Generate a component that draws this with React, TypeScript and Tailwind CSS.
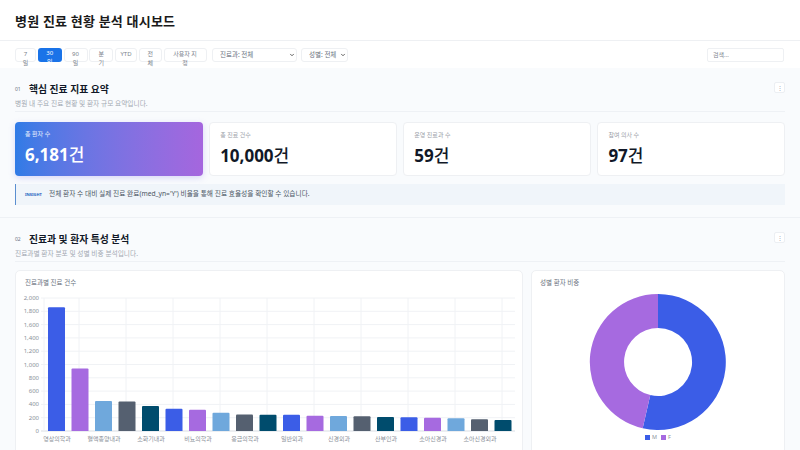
import { ChevronDown } from "lucide-react";

const font = "[font-family:'Noto_Sans','Noto_Sans_CJK_KR',sans-serif]";

const ranges = [
  { label: "7일", size: "w-[21px] px-[6px]" },
  { label: "30일", size: "w-6 px-[6px]", active: true },
  { label: "90일", size: "w-6 px-[6px]" },
  { label: "분기", size: "w-6 px-[7px]" },
  { label: "YTD", size: "w-[22px] px-[2px]" },
  { label: "전체", size: "w-[23px] px-[6px]" },
  { label: "사용자 지정", size: "w-[43px] px-[7px]" },
];

const kpis = [
  { label: "총 환자 수", value: "6,181", highlight: true },
  { label: "총 진료 건수", value: "10,000" },
  { label: "운영 진료과 수", value: "59" },
  { label: "참여 의사 수", value: "97" },
];

const palette = ["#3b5de7", "#a66ae0", "#6fa8dc", "#556070", "#004c6d"];
const visits = [1860, 940, 450, 445, 375, 335, 320, 275, 250, 245, 245, 230, 225, 220, 210, 205, 200, 190, 175, 165];
const depts = ["영상의학과", "혈액종양내과", "소화기내과", "비뇨의학과", "응급의학과", "일반외과", "신경외과", "산부인과", "소아신경과", "소아신경외과"];

function SectionHead({ num, title, desc }: { num: string; title: string; desc: string }) {
  return (
    <div className="flex items-start justify-between border-b border-[#eef1f5] h-[30px]">
      <div>
        <div className="flex items-center h-[15px]">
          <span className="w-[14px] text-[5px] text-[#6b7280]">{num}</span>
          <h2 className="text-[9.8px] leading-none font-bold text-[#111827]">{title}</h2>
        </div>
        <p className="mt-[3px] text-[6.7px] leading-[8px] text-[#a3a9b2]">{desc}</p>
      </div>
      <button className="w-[11px] h-[11px] bg-white border border-[#eceff3] rounded-[2px] text-[6px] leading-none text-[#9ca3af] flex items-center justify-center">
        ⋮
      </button>
    </div>
  );
}

function BarChart() {
  const yBase = 150;
  const scale = 133 / 2000;
  return (
    <svg width="506" height="170" className="block">
      {Array.from({ length: 11 }, (_, i) => {
        const y = yBase - i * 13.3;
        return (
          <g key={i}>
            <line x1="25" x2="499" y1={y} y2={y} stroke={i === 0 ? "#d9dde3" : "#f0f2f5"} />
            <text x="23" y={y + 2} textAnchor="end" fontSize="6" fill="#8a9099">
              {(i * 200).toLocaleString("en-US")}
            </text>
          </g>
        );
      })}
      {[28, 63, 110, 157, 204, 251, 298, 345, 392, 439, 486].map((x) => (
        <line key={x} x1={x} x2={x} y1={yBase - 133} y2={yBase} stroke="#f0f2f5" />
      ))}
      {visits.map((v, i) => {
        const left = 32 + i * 23.5;
        const top = yBase - v * scale;
        return (
          <path
            key={i}
            d={`M${left} ${yBase}V${top + 1}q0 -1 1 -1H${left + 16}q1 0 1 1V${yBase}Z`}
            fill={palette[i % 5]}
          />
        );
      })}
      {depts.map((d, i) => (
        <text key={d} x={41 + i * 47} y={160} textAnchor="middle" fontSize="6" fill="#8a9099">
          {d}
        </text>
      ))}
    </svg>
  );
}

function Donut() {
  return (
    <svg width="140" height="140" viewBox="-70 -70 140 140" className="block">
      <path d="M0 -68A68 68 0 1 1 -15.3 66.3L-7.7 33.1A34 34 0 1 0 0 -34Z" fill="#3b5de7" />
      <path d="M-15.3 66.3A68 68 0 0 1 0 -68L0 -34A34 34 0 0 0 -7.7 33.1Z" fill="#a66ae0" />
    </svg>
  );
}

function Select({ label, className }: { label: string; className: string }) {
  return (
    <div className={`relative h-[14px] ${className}`}>
      <select className="block w-full h-full appearance-none bg-white border border-[#eef0f3] rounded-[3px] text-[6.5px] text-[#6b7280] pl-[7px]">
        <option>{label}</option>
      </select>
      <ChevronDown size={6} strokeWidth={3} className="absolute right-[2px] top-1 text-[#333] pointer-events-none" />
    </div>
  );
}

export default function App() {
  return (
    <div className={`w-[800px] h-[450px] overflow-hidden bg-[#f9fbfd] ${font}`}>
      {/* Title */}
      <header className="h-[41px] bg-white border-b border-[#eef0f3] flex items-center px-[15px] pt-[4px]">
        <h1 className="text-[13px] font-semibold tracking-[0.2px] text-[#1a1a1a]">병원 진료 현황 분석 대시보드</h1>
      </header>

      {/* Filters */}
      <div className="h-[27px] bg-white flex items-start pt-[7px] pl-[15px] pr-[16px]">
        <div className="flex gap-[1.75px]">
          {ranges.map((r) => (
            <button
              key={r.label}
              className={`${r.size} h-[14px] rounded-[3px] text-[6px] leading-[9px] pt-[1px] flex flex-col justify-start ${
                r.active ? "bg-[#1a73e8] text-white" : "bg-white border border-[#eef0f3] text-[#7b828c]"
              }`}
            >
              <span className="block w-full text-center break-all">{r.label}</span>
            </button>
          ))}
        </div>
        <Select label="진료과: 전체" className="ml-[5.5px] w-[85px]" />
        <Select label="성별: 전체" className="ml-[4px] w-[47px]" />
        <input
          placeholder="검색..."
          className="ml-auto w-[77px] h-[14px] bg-white border border-[#eef0f3] rounded-[2px] text-[6px] px-[5px] placeholder:text-[#7b828c]"
        />
      </div>

      {/* Section 1 */}
      <section className="h-[150px] px-[15px] pt-[14px] border-b border-[#eef1f5]">
        <SectionHead num="01" title="핵심 진료 지표 요약" desc="병원 내 주요 진료 현황 및 환자 규모 요약입니다." />
        <div className="mt-[10px] grid grid-cols-4 gap-[6.5px]">
          {kpis.map((k) => (
            <div
              key={k.label}
              className={`h-[54px] rounded-[4px] px-[10px] ${
                k.highlight
                  ? "bg-gradient-to-r from-[#2f7be6] to-[#a566de] text-white shadow-[0_2px_6px_rgba(120,110,230,0.25)]"
                  : "bg-white border border-[#eef0f3] text-[#111827]"
              }`}
            >
              <div className={`mt-[8px] text-[6px] leading-[8px] ${k.highlight ? "text-white/90" : "text-[#9aa0a8]"}`}>{k.label}</div>
              <div className="mt-[4px] text-[17px] leading-[26px] font-bold">
                {k.value}
                <span className="font-medium">건</span>
              </div>
            </div>
          ))}
        </div>
        <div className="mt-[8px] h-[21px] bg-[#f0f5fa] border-l border-[#5b8fd0] flex items-center pl-[9px] gap-[5px]">
          <span className="w-[19px] text-[4px] leading-[3px] font-bold text-[#1a5fc0]">INSIGHT</span>
          <span className="text-[6.7px] text-[#4b5563]">
            전체 환자 수 대비 실제 진료 완료(med_yn='Y') 비율을 통해 진료 효율성을 확인할 수 있습니다.
          </span>
        </div>
      </section>

      {/* Section 2 */}
      <section className="px-[15px] pt-[14px]">
        <SectionHead num="02" title="진료과 및 환자 특성 분석" desc="진료과별 환자 분포 및 성별 비중 분석입니다." />
        <div className="mt-2 flex gap-2">
          <div className="w-[508px] h-[200px] bg-white border border-[#eef0f3] rounded-[5px] pt-[7px] pl-[9px]">
            <div className="text-[6.5px] leading-[9px] text-[#6b7280]">진료과별 진료 건수</div>
            <div className="-mt-[6px] -ml-[9px]">
              <BarChart />
            </div>
          </div>
          <div className="w-[254px] h-[200px] bg-white border border-[#eef0f3] rounded-[5px] pt-[7px] pl-[8px]">
            <div className="text-[6.5px] leading-[9px] text-[#6b7280]">성별 환자 비중</div>
            <div className="flex justify-center -ml-[8px] mt-[5px]">
              <Donut />
            </div>
            <div className="mt-[2px] flex justify-center gap-[4px] -ml-[8px] text-[5.5px] leading-[6px] text-[#8b929c]">
              <span className="flex items-center gap-[2px]">
                <i className="block w-[5px] h-[5px] bg-[#3b5de7]" />M
              </span>
              <span className="flex items-center gap-[2px]">
                <i className="block w-[5px] h-[5px] bg-[#a66ae0]" />F
              </span>
            </div>
          </div>
        </div>
      </section>
    </div>
  );
}
